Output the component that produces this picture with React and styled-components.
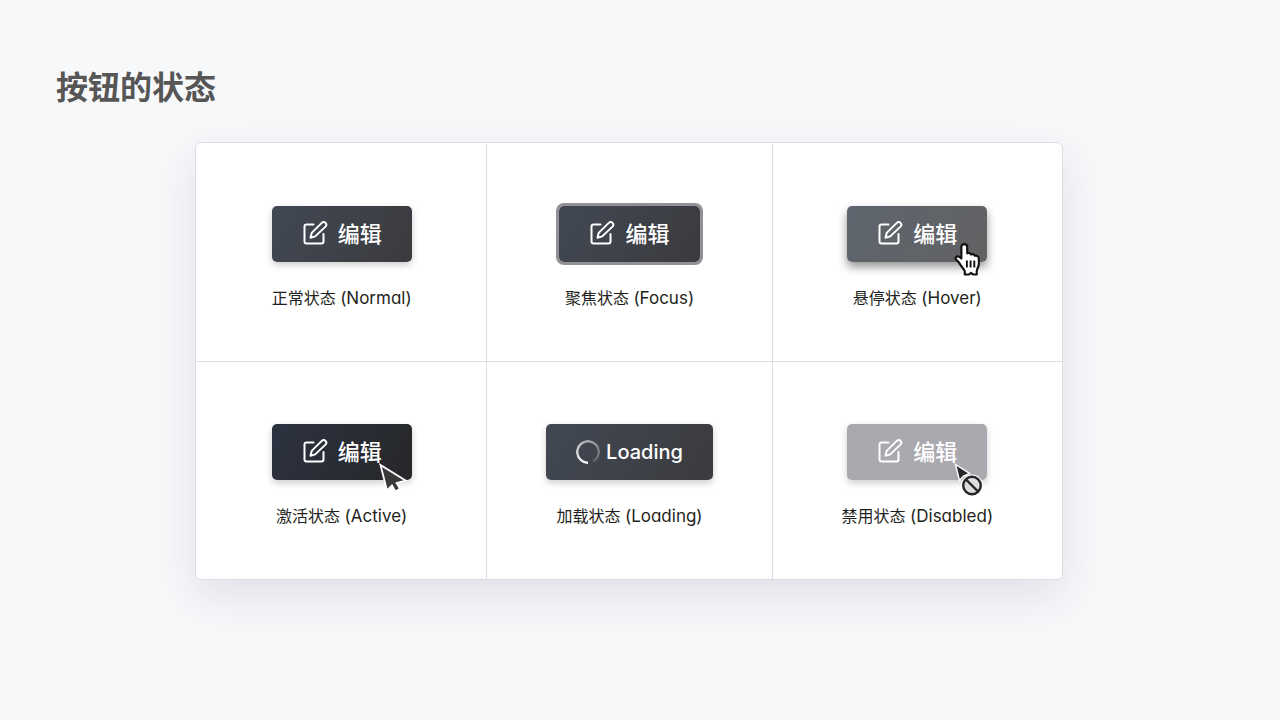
import React from "react";
import styled, { createGlobalStyle, css } from "styled-components";

const GlobalStyle = createGlobalStyle`
  * {
    box-sizing: border-box;
  }

  body {
    margin: 0;
    background-color: #f7f8fa;
    font-family: Inter, "Noto Sans CJK SC", sans-serif;
  }
`;

const Page = styled.main`
  min-height: 100vh;
  padding: 64px 56px;
`;

const Title = styled.h1`
  margin: 0;
  font-size: 32px;
  line-height: 48px;
  font-weight: 700;
  color: #565656;
`;

const BoardArea = styled.div`
  padding-right: 22px;
`;

const Board = styled.section`
  display: grid;
  grid-template-columns: 291fr 286fr 291fr;
  width: 100%;
  max-width: 868px;
  margin: 30px auto 0;
  background-color: #fff;
  border: 1px solid #dcdde4;
  border-radius: 6px;
  box-shadow: 0 16px 44px rgba(40, 44, 80, 0.11);
`;

const Cell = styled.figure`
  display: flex;
  flex-direction: column;
  align-items: center;
  gap: 24px;
  margin: 0;
  padding: 62px 0 51px;
  border-left: 1px solid #dcdde2;
  border-top: 1px solid #dcdde2;

  &:nth-child(3n + 1) {
    border-left-color: transparent;
  }

  &:nth-child(-n + 3) {
    border-top-color: transparent;
  }
`;

const Caption = styled.figcaption`
  font-size: 16px;
  line-height: 24px;
  color: #1f1f21;
`;

const StateName = styled.span`
  font-size: 17px;
  font-feature-settings: "cv11";
`;

const ButtonWrap = styled.div`
  position: relative;
`;

const looks = {
  normal: css`
    background: linear-gradient(120deg, #414854, #3b3b3e);
  `,
  focus: css`
    background: linear-gradient(120deg, #414854, #3b3b3e);
    box-shadow: 0 0 0 3px #929296;
  `,
  hover: css`
    background: linear-gradient(120deg, #5e656e, #626263);
    box-shadow: 0 5px 10px rgba(0, 0, 0, 0.42);
  `,
  active: css`
    background: linear-gradient(120deg, #2c3240, #262729);
  `,
  disabled: css`
    background: #a9a9af;
  `,
};

const StateButton = styled.button`
  display: flex;
  align-items: center;
  gap: ${({ $look }) => ($look === "loading" ? "6px" : "10px")};
  height: 56px;
  padding: 0 30px;
  border: 0;
  border-radius: 5px;
  outline: none;
  font-family: inherit;
  font-size: ${({ $look }) => ($look === "loading" ? "20px" : "22px")};
  line-height: 32px;
  font-weight: 500;
  color: #fff;
  box-shadow: 0 3px 7px rgba(0, 0, 0, 0.2);
  ${({ $look }) => looks[$look] || looks.normal}
`;

const Icon = styled.svg`
  flex: none;
  width: 26px;
  height: 26px;
`;

const Spinner = styled.span`
  width: 24px;
  height: 24px;
  border-radius: 50%;
  background: conic-gradient(
    from 180deg,
    #fff,
    rgba(255, 255, 255, 0.55) 180deg,
    rgba(255, 255, 255, 0.15) 330deg,
    transparent 335deg
  );
  mask: radial-gradient(circle, transparent 9px, #000 10px);
`;

const Pointer = styled.svg`
  position: absolute;
  top: 36px;
  right: 0;
  width: 36px;
  height: 36px;
  pointer-events: none;
`;

const EditIcon = () => (
  <Icon
    viewBox="0 1 26 26"
    fill="none"
    stroke="currentColor"
    strokeWidth="2"
    strokeLinecap="round"
    strokeLinejoin="round"
    aria-hidden="true"
  >
    <path d="M11.5 4.5H4.500a2 2 0 0 0-2 2v15a2 2 0 0 0 2 2h15a2 2 0 0 0 2-2v-7.500" />
    <path d="M19.800 2.900a2.600 2.600 0 0 1 3.700 3.700L13.200 16.400l-4.700 1.300 1.200-4.800Z" />
  </Icon>
);

const HandPointer = () => (
  <Pointer viewBox="-2.5 0.5 34 34" aria-hidden="true">
    <path
      d="M10 2.500c1.700 0 2.800 1.200 2.800 3v5.700c1.500-.6 3-.1 3.600 1 1.500-.5 2.900 0 3.600 1.200 2.300-.4 3.800.9 3.800 3.400v4.200c0 3-1.800 4.300-2 7.200v3h-3.200l-2.200-1.500-2 1.500h-3.900v-3c-.5-2.200-3.300-4.300-4.700-7.200-.7-1.500-2.400-2.500-3.600-4.200-.9-1.300.3-2.900 2-2.700 1.100.1 2 .8 3.100 1.900V5.500c0-1.800 1.100-3 2.700-3Z"
      fill="#fff"
      stroke="#111"
      strokeWidth="2"
      strokeLinejoin="round"
    />
    <path
      d="M12.500 18v6.500M16 18v6.500M19.500 18v6.500"
      fill="none"
      stroke="#111"
      strokeWidth="1.800"
    />
  </Pointer>
);

const ArrowPointer = () => (
  <Pointer viewBox="0 0 36 36" aria-hidden="true">
    <path
      d="M4.500 5 11 30.500l5-5 3.300 6 4.700-2.700-3.400-5.800 8.900-2.500Z"
      fill="#39393c"
      stroke="#fff"
      strokeWidth="1.800"
    />
  </Pointer>
);

const BlockedPointer = () => (
  <Pointer viewBox="0 0 36 36" aria-hidden="true">
    <path
      d="M4.500 4.500 8.500 20.500l4-4.500 6-2.700Z"
      fill="#262628"
      stroke="#fff"
      strokeWidth="1.400"
    />
    <circle cx="21" cy="25.500" r="11" fill="#fff" />
    <circle
      cx="21"
      cy="25.500"
      r="8.800"
      fill="#ddd"
      stroke="#262628"
      strokeWidth="2.400"
    />
    <path d="m15 19.500 12 12" stroke="#262628" strokeWidth="2.400" />
  </Pointer>
);

const states = [
  { look: "normal", label: "正常状态", name: "(Normal)" },
  {
    look: "focus",
    label: "聚焦状态",
    name: "(Focus)",
  },
  {
    look: "hover",
    label: "悬停状态",
    name: "(Hover)",
    pointer: <HandPointer />,
  },
  {
    look: "active",
    label: "激活状态",
    name: "(Active)",
    pointer: <ArrowPointer />,
  },
  { look: "loading", label: "加载状态", name: "(Loading)" },
  {
    look: "disabled",
    label: "禁用状态",
    name: "(Disabled)",
    pointer: <BlockedPointer />,
  },
];

const App = () => {
  return (
    <Page>
      <GlobalStyle />
      <Title>按钮的状态</Title>
      <BoardArea>
        <Board>
          {states.map(({ look, label, name, pointer }) => (
            <Cell key={look}>
              <ButtonWrap>
                <StateButton
                  type="button"
                  $look={look}
                  disabled={look === "disabled"}
                  aria-busy={look === "loading"}
                  aria-describedby={`${look}-caption`}
                >
                  {look === "loading" ? <Spinner /> : <EditIcon />}
                  {look === "loading" ? "Loading" : "编辑"}
                </StateButton>
                {pointer}
              </ButtonWrap>
              <Caption id={`${look}-caption`}>
                {label} <StateName>{name}</StateName>
              </Caption>
            </Cell>
          ))}
        </Board>
      </BoardArea>
    </Page>
  );
};

export default App;
